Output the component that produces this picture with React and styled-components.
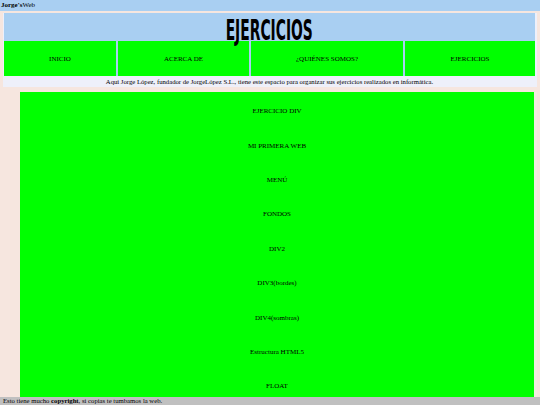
import styled, { createGlobalStyle } from "styled-components";

const GlobalStyle = createGlobalStyle`
  html, body {
    margin: 0;
    padding: 0;
    background: #f6e6df;
    font-family: "Liberation Serif", "Times New Roman", serif;
    color: #000;
  }
`;

const navItems = [
  { label: "INICIO", grow: 112 },
  { label: "ACERCA DE", grow: 131 },
  { label: "¿QUIÉNES SOMOS?", grow: 152 },
  { label: "EJERCICIOS", grow: 130 },
];

const exercises = [
  "EJERCICIO DIV",
  "MI PRIMERA WEB",
  "MENÚ",
  "FONDOS",
  "DIV2",
  "DIV3(bordes)",
  "DIV4(sombras)",
  "Estructura HTML5",
  "FLOAT",
];

export default function App() {
  return (
    <Page>
      <GlobalStyle />
      <TopBar>
        <b>Jorge's</b>Web
      </TopBar>
      <Header>
        <TitleBand>
          <Title>EJERCICIOS</Title>
        </TitleBand>
        <Nav>
          {navItems.map((item) => (
            <NavCell key={item.label} $grow={item.grow}>
              {item.label}
            </NavCell>
          ))}
        </Nav>
        <Intro>
          Aqui Jorge López, fundador de JorgeLópez S.L., tiene este espacio para
          organizar sus ejercicios realizados en informática.
        </Intro>
      </Header>
      <Main>
        {exercises.map((name) => (
          <Exercise key={name}>{name}</Exercise>
        ))}
      </Main>
      <Footer>
        Esto tiene mucho <b>copyright</b>, si copias te tumbamos la web.
      </Footer>
    </Page>
  );
}

const Page = styled.div`
  width: 540px;
  min-height: 405px;
  overflow: hidden;
`;

const TopBar = styled.div`
  height: 11px;
  line-height: 11px;
  padding-left: 1px;
  background: #a9cff2;
  font-size: 7px;
`;

const Header = styled.header`
  margin: 2px 3px 0 3px;
  padding: 0 2px 1px 1px;
  background: #eef0fa;
`;

const TitleBand = styled.div`
  height: 28px;
  background: #a9cff2;
  display: flex;
  align-items: flex-end;
  justify-content: center;
`;

const Title = styled.h1`
  margin: 0;
  display: inline-block;
  font-family: "Liberation Sans Narrow", "DejaVu Sans Condensed", sans-serif;
  font-weight: 700;
  font-size: 28px;
  line-height: 20px;
  color: #000;
  transform: scaleX(0.55);
`;

const Nav = styled.nav`
  display: flex;
  gap: 2px;
  height: 35px;
  background: #a9cff2;
`;

const NavCell = styled.div`
  flex: ${(p) => p.$grow} 1 0;
  background: #00ff00;
  display: flex;
  align-items: center;
  justify-content: center;
  font-size: 7px;
`;

const Intro = styled.p`
  margin: 1px 0 0 0;
  height: 9px;
  line-height: 9px;
  text-align: center;
  font-size: 6.7px;
`;

const Main = styled.main`
  margin: 5px 3px 0 20px;
  padding-top: 2px;
  background: #00ff00;
  border-right: 3px solid #f2ece2;
`;

const Exercise = styled.div`
  height: 34.4px;
  display: flex;
  align-items: center;
  justify-content: center;
  font-size: 7px;
`;

const Footer = styled.footer`
  position: fixed;
  left: 0;
  right: 0;
  bottom: 0;
  height: 8px;
  line-height: 8px;
  padding-left: 3px;
  background: #c0c0c0;
  font-size: 6.7px;
`;
